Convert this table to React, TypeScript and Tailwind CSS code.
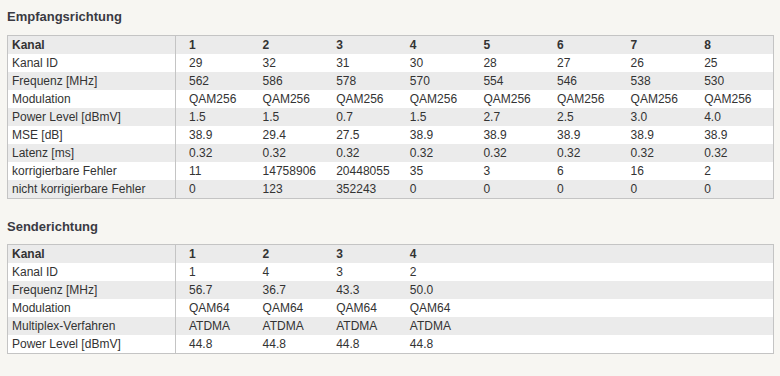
const downstream = {
  head: ["Kanal", "1", "2", "3", "4", "5", "6", "7", "8"],
  rows: [
    ["Kanal ID", "29", "32", "31", "30", "28", "27", "26", "25"],
    ["Frequenz [MHz]", "562", "586", "578", "570", "554", "546", "538", "530"],
    ["Modulation", "QAM256", "QAM256", "QAM256", "QAM256", "QAM256", "QAM256", "QAM256", "QAM256"],
    ["Power Level [dBmV]", "1.5", "1.5", "0.7", "1.5", "2.7", "2.5", "3.0", "4.0"],
    ["MSE [dB]", "38.9", "29.4", "27.5", "38.9", "38.9", "38.9", "38.9", "38.9"],
    ["Latenz [ms]", "0.32", "0.32", "0.32", "0.32", "0.32", "0.32", "0.32", "0.32"],
    ["korrigierbare Fehler", "11", "14758906", "20448055", "35", "3", "6", "16", "2"],
    ["nicht korrigierbare Fehler", "0", "123", "352243", "0", "0", "0", "0", "0"],
  ],
}

const upstream = {
  head: ["Kanal", "1", "2", "3", "4", "", "", "", ""],
  rows: [
    ["Kanal ID", "1", "4", "3", "2", "", "", "", ""],
    ["Frequenz [MHz]", "56.7", "36.7", "43.3", "50.0", "", "", "", ""],
    ["Modulation", "QAM64", "QAM64", "QAM64", "QAM64", "", "", "", ""],
    ["Multiplex-Verfahren", "ATDMA", "ATDMA", "ATDMA", "ATDMA", "", "", "", ""],
    ["Power Level [dBmV]", "44.8", "44.8", "44.8", "44.8", "", "", "", ""],
  ],
}

function Row({ cells, bold, gray }: { cells: string[]; bold?: boolean; gray?: boolean }) {
  return (
    <div
      className={`grid h-[18px] grid-cols-[168px_repeat(7,73.6px)_1fr] leading-[18px] ${gray ? "bg-[#ebebeb]" : "bg-white"} ${bold ? "font-bold" : ""}`}
    >
      {cells.map((c, i) => (
        <div
          key={i}
          className={i === 0 ? "border-r border-[#c4c4c4] pl-[4px] whitespace-nowrap" : "pl-[13px] whitespace-nowrap"}
        >
          {c}
        </div>
      ))}
    </div>
  )
}

function DataTable({ data }: { data: { head: string[]; rows: string[][] } }) {
  return (
    <div className="border border-[#c4c4c4] text-[12px] text-[#333]">
      <Row cells={data.head} bold gray />
      {data.rows.map((r, i) => (
        <Row key={i} cells={r} gray={i % 2 === 1} />
      ))}
    </div>
  )
}

export default function App() {
  return (
    <div
      className="h-[376px] w-[780px] bg-[#f7f6f2] pl-[7px] pr-[6px] pt-[9px]"
      style={{ fontFamily: '"Liberation Sans", Arial, sans-serif' }}
    >
      <h2 className="text-[13px] font-bold leading-[16px] text-[#3a3a42]">Empfangsrichtung</h2>
      <div className="mt-[10px]">
        <DataTable data={downstream} />
      </div>
      <h2 className="mt-[20px] text-[13px] font-bold leading-[16px] text-[#3a3a42]">Senderichtung</h2>
      <div className="mt-[9px]">
        <DataTable data={upstream} />
      </div>
    </div>
  )
}
